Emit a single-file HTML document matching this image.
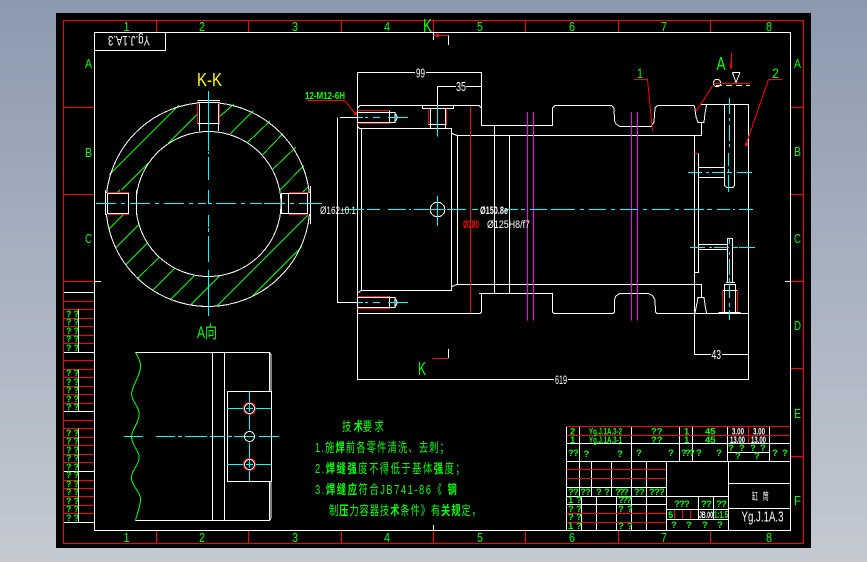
<!DOCTYPE html>
<html><head><meta charset="utf-8"><style>
html,body{margin:0;padding:0;width:867px;height:562px;overflow:hidden;background:#a8b2c0}
svg{display:block}
text{font-family:"Liberation Sans","Noto Sans CJK SC",sans-serif}
.l{fill:none;stroke-width:1;shape-rendering:crispEdges}
</style></head><body>
<svg width="867" height="562" viewBox="0 0 867 562" xmlns="http://www.w3.org/2000/svg">
<defs><linearGradient id="bg" x1="0" y1="0" x2="0" y2="1"><stop offset="0" stop-color="#8c9aae"/><stop offset="1" stop-color="#c4c9d2"/></linearGradient></defs>
<rect width="867" height="562" fill="url(#bg)"/>
<rect x="56" y="13" width="755" height="535" fill="#000"/>

<!-- red frame -->
<g class="l" stroke="#f00">
<path d="M63.5 20.5H803.5V543.5H63.5Z"/>
<path d="M156.5 20.5V32M248.5 20.5V32M341.5 20.5V32M433.5 20.5V32M525.5 20.5V32M618.5 20.5V32M710.5 20.5V32"/>
<path d="M156.5 531V543M248.5 531V543M341.5 531V543M433.5 531V543M525.5 531V543M618.5 531V543M710.5 531V543"/>
<path d="M64 107.5H94M64 194.5H94M64 281.5H94M791 107.5H803M791 194.5H803M791 281.5H803M791 368.5H803M791 456.5H803"/>
<path d="M64 301.5H94M64 309.5H94M64 318.5H94M64 326.5H94M64 335.5H94M64 343.5H94M64 360.5H94M64 369.5H94M64 377.5H94M64 386.5H94M64 394.5H94M64 403.5H94M64 420.5H94M64 428.5H94M64 437.5H94M64 445.5H94M64 454.5H94M64 462.5H94M64 480.5H94M64 488.5H94M64 496.5H94M64 505.5H94M64 513.5H94"/>
</g>
<!-- white frame and left table -->
<g class="l" stroke="#fff">
<path d="M94.5 32.5H790.5V530.5H94.5Z"/>
<path d="M94.5 50.5H165.5V32.5"/>
<path d="M95 281.5H101M785 281.5H790M433.5 525V530M433.5 32V40"/>
<path d="M64 292.5H94M64 352.5H94M64 411.5H94M64 471.5H94M64 522.5H94"/>
<path d="M78.5 309.5V352.5M78.5 369.5V411.5M78.5 428.5V522.5"/>
</g>
<g fill="#0f0" font-size="9" font-weight="bold">
<text x="66 73.5" y="317">??</text><text x="66 73.5" y="325">??</text><text x="66 73.5" y="334">??</text><text x="66 73.5" y="342">??</text><text x="66 73.5" y="351">??</text>
<text x="66 73.5" y="376">??</text><text x="66 73.5" y="385">??</text><text x="66 73.5" y="393">??</text><text x="66 73.5" y="402">??</text><text x="66 73.5" y="410">??</text>
<text x="66 73.5" y="436">??</text><text x="66 73.5" y="444">??</text><text x="66 73.5" y="453">??</text><text x="66 73.5" y="461">??</text><text x="66 73.5" y="470">??</text><text x="66 73.5" y="478">??</text><text x="66 73.5" y="487">??</text><text x="66 73.5" y="495">??</text><text x="66 73.5" y="504">??</text><text x="66 73.5" y="512">??</text><text x="66 73.5" y="521">??</text>
</g>
<!-- frame labels -->
<g fill="#0f0" font-size="13">
<text x="123.5" y="31" textLength="6" lengthAdjust="spacingAndGlyphs">1</text><text x="199" y="31" textLength="6" lengthAdjust="spacingAndGlyphs">2</text><text x="292" y="31" textLength="6" lengthAdjust="spacingAndGlyphs">3</text><text x="384" y="31" textLength="6" lengthAdjust="spacingAndGlyphs">4</text><text x="477" y="31" textLength="6" lengthAdjust="spacingAndGlyphs">5</text><text x="569" y="31" textLength="6" lengthAdjust="spacingAndGlyphs">6</text><text x="661" y="31" textLength="6" lengthAdjust="spacingAndGlyphs">7</text><text x="766" y="31" textLength="6" lengthAdjust="spacingAndGlyphs">8</text>
<text x="123.5" y="542" textLength="6" lengthAdjust="spacingAndGlyphs">1</text><text x="199" y="542" textLength="6" lengthAdjust="spacingAndGlyphs">2</text><text x="292" y="542" textLength="6" lengthAdjust="spacingAndGlyphs">3</text><text x="384" y="542" textLength="6" lengthAdjust="spacingAndGlyphs">4</text><text x="477" y="542" textLength="6" lengthAdjust="spacingAndGlyphs">5</text><text x="569" y="542" textLength="6" lengthAdjust="spacingAndGlyphs">6</text><text x="661" y="542" textLength="6" lengthAdjust="spacingAndGlyphs">7</text><text x="766" y="542" textLength="6" lengthAdjust="spacingAndGlyphs">8</text>
<text x="85" y="68" textLength="7" lengthAdjust="spacingAndGlyphs">A</text><text x="85" y="157" textLength="7" lengthAdjust="spacingAndGlyphs">B</text><text x="85" y="243" textLength="7" lengthAdjust="spacingAndGlyphs">C</text>
<text x="794" y="68" textLength="7" lengthAdjust="spacingAndGlyphs">A</text><text x="794" y="156" textLength="7" lengthAdjust="spacingAndGlyphs">B</text><text x="794" y="243" textLength="7" lengthAdjust="spacingAndGlyphs">C</text><text x="794" y="330" textLength="7" lengthAdjust="spacingAndGlyphs">D</text><text x="794" y="418" textLength="7" lengthAdjust="spacingAndGlyphs">E</text><text x="794" y="505" textLength="7" lengthAdjust="spacingAndGlyphs">F</text>
</g>
<text transform="translate(150 36) rotate(180)" x="0" y="0" fill="#fff" font-size="13.5" textLength="42" lengthAdjust="spacingAndGlyphs">Yg.J.1A.3</text>

<!-- section K-K -->
<text x="197" y="86" fill="#ff0" font-size="18" textLength="25" lengthAdjust="spacingAndGlyphs">K-K</text>
<g class="l" stroke="#0f0">
<path d="M109 175L179 105M121.5 190L148 163.5M168 143.5L198 113.5M218 118L234 104M230 134L253 111M247 143L270 121M262.5 155L283 133.5M273 169L296 147M280 190L304 165.5"/>
<path d="M116.5 193.5L120 190M108.5 229.5L124 214M115.5 248L138.5 225M125.5 265L147 243.5M137 279L159 257.5M152 291L175 268M170 300L194 276M190.5 305L220 275.5M216.5 306.5L308 215M251.5 297L301.5 247M301.5 193.5L308 187"/>
</g>
<g class="l" stroke="#fff">
<circle cx="208" cy="204.5" r="102"/>
<circle cx="208.5" cy="204" r="72.5"/>
</g>
<rect x="199" y="101" width="20" height="30" fill="#000"/>
<rect x="106" y="193" width="30" height="21" fill="#000"/>
<rect x="281" y="193" width="29" height="21" fill="#000"/>
<g class="l" stroke="#fff">
<path d="M197.5 100.5H220M197 102.5H220M199.5 103.5V131M218.5 103.5V131M197.5 123.5H219.5"/>
<path d="M105.5 190V215M107.5 193V214M128.5 193V214M136.5 190V215M107 193.5H128M107 213.5H128"/>
<path d="M281.5 193V214M288.5 193V214M307.5 193V214M310.5 186V224M282 193.5H308M282 213.5H308"/>
</g>
<g class="l" stroke="#f00">
<path d="M197.5 103V123M219.5 103V123M108 192.5H129M108 214.5H129M289 192.5H308M289 214.5H308"/>
</g>
<g class="l" stroke="#0ff">
<path d="M208.5 91V151M208.5 152V154M208.5 157V180M208.5 190V203M208.5 215V227M208.5 228V232M208.5 236V262M208.5 270V316"/>
<path d="M96 203.5H116M121 203.5H125M130 203.5H150M155 203.5H159M164 203.5H184M189 203.5H193M198 203.5H206M208 203.5H212M216 203.5H236M241 203.5H245M250 203.5H262M264 203.5H285M290 203.5H294M299 203.5H322"/>
</g>
<text x="197" y="338" fill="#0f0" font-size="17" textLength="20" lengthAdjust="spacingAndGlyphs">A向</text>
<text x="305" y="99" fill="#0f0" font-size="10" font-weight="bold" textLength="40" lengthAdjust="spacingAndGlyphs">12-M12-6H</text>

<!-- main view white -->
<g class="l" stroke="#fff">
<path d="M357.5 72.5H481.5V125.5H552.5V108L555 105.5H611.5L614 108L614.5 121L616 124L620 126.5H648L651 126.5L654 122L655 108L657 106L658 105.5H694.5"/>
<path d="M700 104.5H748.5V379.5H357.5V72.5"/>
<path d="M357.5 108L360 105.5H479L481.5 108"/>
<path d="M694.5 106L696 117L698 122.5H704L705 113L706.5 105"/>
<path d="M701.5 122.5V135.5H457.5"/>
<path d="M694.5 135.5V354.5H748.5M698.5 153.5V272.5H694.5"/>
<path d="M457.5 284.5H701.5V297.5"/>
<path d="M695 313L698 297.5H704L705 305L706.5 313"/>
<path d="M358 313.5H480L481.5 312V293.5H552.5V312L554 313.5H613L614.5 312V300L615.5 296.5L618.5 294L621 293.5H648.5L652.5 295.5L655 300L655.5 312L657 313.5H748"/>
<path d="M479 293.5H481.5"/>
<path d="M357.5 126.5L359.5 128.5H451.5V133L453 134L457.5 135.5V284.5L455 285L451.5 287V290.5H361.5V128.5M451.5 133V290"/>
<path d="M357.5 293L361 290.5"/>
<path d="M494.5 125.5V293.5M509.5 135.5V293.5"/>
<path d="M340 117.5H357.5M337.5 117.5V302.5H357.5"/>
<path d="M357.5 112.5H395V122.5H357.5M389.5 110.5V123.5M395 113L397.5 117.5L395 122"/>
<path d="M357.5 297.5H395V307.5H357.5M389.5 296.5V308.5M395 298L397.5 302.5L395 307"/>
<path d="M422.5 106V108.5H453.5V106"/>
<path d="M430.5 108.5V128.5M445.5 108.5V128.5M428 124.5H447"/>
<path d="M437.5 86.5V108M437.5 86.5H456M466 86.5H481.5"/>
<path d="M724.5 105V185.5L727 187.5H733L734.5 185.5V105"/>
<path d="M698.5 167.5H724M698.5 177.5H724"/>
<path d="M698.5 244.5H727M698.5 249.5H727"/>
<path d="M727.5 283V238.5H732.5V283M726 282.5H735M724.5 313V284.5H735.5V313M722 290.5H737M718.5 312.5H740.5"/>
<path d="M448.5 35V45M433.5 35V38M448.5 349V358"/>
<path d="M732.5 72.5H740M732.5 72.5L736 82.5L740 72.5"/>
</g>
<g class="l" stroke="#fff"><circle cx="437.5" cy="209.5" r="7.3"/><circle cx="717" cy="83" r="3.7"/></g>
<g class="l" stroke="#f0f"><path d="M527.5 112V320.5M533.5 112V320.5M631.5 112V320.5M637.5 112V320.5"/></g>
<g class="l" stroke="#f00">
<path d="M470.5 106V313"/>
<path d="M357.5 110.5H389M357.5 123.5H389M357.5 296.5H389M357.5 308.5H389"/>
<path d="M428.5 108.5V124.5M446.5 108.5V124.5"/>
<path d="M306.5 100.5H345L356 115"/>
<path d="M433.5 35.5H448.5M432.5 358.5H448.5"/>
<path d="M633.5 79.5H647.5L652.5 130.5M782.5 79.5H768.5L746 144.5"/>
<path d="M713.5 83.5H750M712.5 86L696 111.5M731.5 53V69"/>
<path d="M694.5 153.5H698M722.5 290V312M737.5 290V312"/>
</g>
<rect x="436" y="34" width="3" height="3" fill="#f00"/><rect x="730" y="63" width="2" height="5" fill="#f00"/><rect x="745" y="143" width="3" height="3" fill="#f00"/><rect x="354" y="112" width="3" height="3" fill="#f00"/>
<g class="l" stroke="#ff0" stroke-dasharray="6 4"><path d="M716 85.5H750"/></g>
<g class="l" stroke="#0ff">
<path d="M344 209.5H364M367 209.5H380M388 209.5H406M409 209.5H411M414 209.5H429M431 209.5H444M447 209.5H466M472 209.5H478M506 209.5H518M521 209.5H525M530 209.5H547M551 209.5H575M580 209.5H584M589 209.5H606M611 209.5H615M620 209.5H638M643 209.5H647M652 209.5H670M675 209.5H679M684 209.5H704M707 209.5H712M717 209.5H730M733 209.5H735M739 209.5H753"/>
<path d="M437.5 196V226"/>
<path d="M357.5 117.5H363M365 117.5H368M373 117.5H380M388 117.5H408"/>
<path d="M357.5 302.5H363M365 302.5H368M373 302.5H380M388 302.5H408"/>
<path d="M437.5 105V136.5"/>
<path d="M729.5 98V114M729.5 118V121M729.5 125V141M729.5 144V147M728.5 153V166M728.5 169V172M728.5 175V192"/>
<path d="M688 172.5H702M706 172.5H709M712 172.5H724M727 172.5H732M737 172.5H752"/>
<path d="M690 247.5H705M709 247.5H712M714 247.5H729M733 247.5H738M739 247.5H755"/>
<path d="M729.5 238V244M729.5 252V255M729.5 259V275M729.5 278V283M729.5 285V298M729.5 303V307M729.5 310V320"/>
</g>
<rect x="415" y="70" width="11" height="5" fill="#000"/>
<rect x="554" y="377" width="14" height="5" fill="#000"/>
<rect x="711" y="352" width="11" height="5" fill="#000"/>
<g fill="#fff" font-size="13">
<text x="416" y="77.5" textLength="9" lengthAdjust="spacingAndGlyphs">99</text>
<text x="456" y="91" textLength="10" lengthAdjust="spacingAndGlyphs">35</text>
<text x="555" y="384" textLength="12" lengthAdjust="spacingAndGlyphs" font-size="11.5">619</text>
<text x="711.5" y="359" textLength="9.5" lengthAdjust="spacingAndGlyphs">43</text>
</g>
<g fill="#fff" font-size="11">
<text x="320" y="214" textLength="36" lengthAdjust="spacingAndGlyphs">Ø162±0.1</text>
<text x="480" y="214" textLength="28" font-weight="bold" lengthAdjust="spacingAndGlyphs">Ø150.8e</text>
<text x="487" y="228" textLength="43" lengthAdjust="spacingAndGlyphs">Ø125H8/f7</text>
</g>
<text x="463" y="228" fill="#f00" font-size="11" textLength="16" font-weight="bold" lengthAdjust="spacingAndGlyphs">Ø180</text>
<g fill="#0f0" font-size="18">
<text x="423" y="32" textLength="9" lengthAdjust="spacingAndGlyphs">K</text>
<text x="418" y="375" textLength="8" lengthAdjust="spacingAndGlyphs">K</text>
<text x="716.5" y="70" textLength="9" lengthAdjust="spacingAndGlyphs">A</text>
</g>
<g fill="#0f0" font-size="14">
<text x="637" y="78" textLength="6" lengthAdjust="spacingAndGlyphs">1</text>
<text x="772" y="78" textLength="7" lengthAdjust="spacingAndGlyphs">2</text>
</g>

<!-- lower-left view -->
<path d="M135.5 352.5C140 360 141 364 140.5 368C139 378 132 386 131.5 394C132 402 139 406 139 414C139 424 132 428 131.5 437C132 446 139 450 139 457C139 466 131 470 131.5 479C133 488 141 492 140.5 500C140 508 137 514 135.5 520.5" class="l" stroke="#0f0"/>
<g class="l" stroke="#fff">
<path d="M135.5 352.5H269.5L271 354.5V391.5M269.5 352.5V391.5M135.5 520.5H269.5L271 518V481.5M269.5 520.5V481.5"/>
<path d="M212.5 352.5V520.5M224.5 352.5V520.5"/>
<path d="M227.5 391.5H271.5V481.5H227.5Z" />
</g>
<g class="l" stroke="#0ff">
<path d="M249.5 391V402M249.5 414V430M249.5 443V458M249.5 470V481"/>
<path d="M227 408.5H243M255 408.5H271M227 464.5H243M255 464.5H271"/>
<path d="M124 436.5H143M156 436.5H175M178 436.5H182M185 436.5H207M210 436.5H225M227 436.5H232M234 436.5H254M259 436.5H279"/>
<path d="M249.5 403V412M246 408.5H253M249.5 459V468M246 464.5H253"/>
</g>
<g class="l">
<circle cx="249.5" cy="408.5" r="6" stroke="#f00"/><circle cx="249.5" cy="408.5" r="5" stroke="#fff"/>
<circle cx="249.5" cy="436.5" r="5" stroke="#fff"/>
<circle cx="249.5" cy="464.5" r="6" stroke="#f00"/><circle cx="249.5" cy="464.5" r="5" stroke="#fff"/>
</g>

<!-- notes -->
<g fill="#0f0" font-size="13">
<text transform="translate(342 431) scale(.72 1)" textLength="58" lengthAdjust="spacing">技 <tspan font-weight="bold">术</tspan>要 求</text>
<text transform="translate(315 452) scale(.72 1)" textLength="186" lengthAdjust="spacing">1.施<tspan font-weight="bold">焊</tspan>前各零件清洗、去刺；</text>
<text transform="translate(315 473) scale(.72 1)" textLength="208" lengthAdjust="spacing">2.<tspan font-weight="bold">焊缝强</tspan>度不得低于基体<tspan font-weight="bold">强</tspan>度；</text>
<text transform="translate(315 494) scale(.72 1)" textLength="197" lengthAdjust="spacing">3.<tspan font-weight="bold">焊缝应</tspan>符合JB741-86《 <tspan font-weight="bold">钢</tspan></text>
<text transform="translate(329 515) scale(.72 1)" textLength="211" lengthAdjust="spacing">制<tspan font-weight="bold">压</tspan>力容器技<tspan font-weight="bold">术</tspan>条件》有<tspan font-weight="bold">关规</tspan>定，</text>
</g>

<!-- title block -->
<g class="l" stroke="#fff">
<path d="M566.5 427V530.5M566.5 443.5H790M566.5 461.5H790M579.5 427V496M631.5 427V530M679.5 427V461.5M692.5 427V461.5M727.5 427V461.5M769.5 427V461.5M727.5 452.5H769.5"/>
<path d="M591.5 461.5V496M611.5 461.5V496M646.5 461.5V530M666.5 461.5V530M566.5 487.5H666M566.5 496.5H728M566.5 504.5H666"/>
<path d="M581.5 496V530M596.5 496V530M616.5 496V530"/>
<path d="M728.5 461.5V530M728 483.5H790M728 508.5H790M666 509.5H728M666 519.5H728M698.5 496.5V519M713.5 496.5V519"/>
</g>
<g class="l" stroke="#f00">
<path d="M566.5 426.5H790M566.5 435.5H790M748.5 427V443M566.5 469.5H666M566.5 478.5H666M566.5 513.5H666M566.5 522.5H666M674.5 510V519M682.5 510V519M690.5 510V519"/>
</g>
<g fill="#0f0" font-size="9.5" font-weight="bold">
<text x="570" y="434.5">2</text><text x="589" y="434.5" textLength="33" lengthAdjust="spacingAndGlyphs">Yg.J.1A.3-2</text><text x="651" y="434.5">??</text><text x="684" y="434.5">1</text><text x="705" y="434.5">45</text>
<text x="570" y="443">1</text><text x="589" y="443" textLength="33" lengthAdjust="spacingAndGlyphs">Yg.J.1A.3-1</text><text x="651" y="443">??</text><text x="684" y="443">1</text><text x="705" y="443">45</text>
<text x="568 573" y="456">??</text><text x="583.5 617" y="457">??</text><text x="636 668" y="456">??</text><text x="681 685 689" y="456">???</text><text x="696 716" y="456">??</text>
<text x="728 739 750 760" y="451">????</text><text x="735 754" y="459">??</text><text x="772 782" y="456">??</text>
<text x="568 573 580 585 596 604" y="495">??????</text><text x="615 619 623 634 639 649 654 659" y="495">????????</text>
<text x="568 576" y="503">1?</text><text x="568 576" y="512">??</text><text x="568 576" y="520">??</text><text x="568 576" y="529">1?</text>
<text x="618 622 626" y="503">???</text><text x="618 627" y="512">??</text><text x="618 627" y="529">??</text>
<text x="674 679 684" y="507">???</text><text x="701 706" y="507">??</text><text x="716 721" y="507">??</text>
<text x="668" y="518">5</text><text x="671 686 702 717" y="528">????</text>
</g>
<g fill="#fff" font-size="9" font-weight="bold">
<text x="732" y="434.5" textLength="12" lengthAdjust="spacingAndGlyphs">3.00</text><text x="753" y="434.5" textLength="12" lengthAdjust="spacingAndGlyphs">3.00</text>
<text x="730" y="443" textLength="15" lengthAdjust="spacingAndGlyphs">13.00</text><text x="751" y="443" textLength="15" lengthAdjust="spacingAndGlyphs">13.00</text>
<text x="699" y="518" textLength="14" lengthAdjust="spacingAndGlyphs">JB.00</text>
</g>
<text x="714" y="518" fill="#0f0" font-size="10" font-weight="bold" textLength="14" lengthAdjust="spacingAndGlyphs">1:1.5</text>
<text transform="translate(752 500) scale(.6 1)" x="0 18" y="0" fill="#fff" font-size="10">缸筒</text>
<text x="741.5" y="521.5" fill="#fff" font-size="15" textLength="42" lengthAdjust="spacingAndGlyphs">Yg.J.1A.3</text>
</svg>
</body></html>
